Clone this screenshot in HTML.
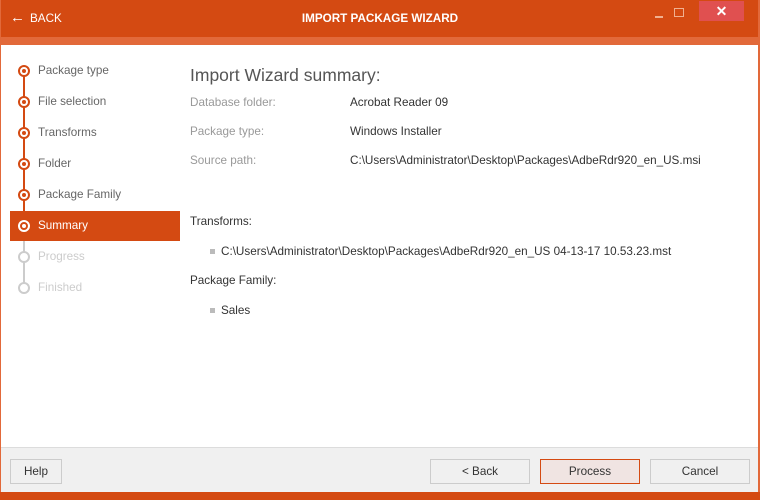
<!DOCTYPE html>
<html><head><meta charset="utf-8"><style>
*{margin:0;padding:0;box-sizing:border-box}
body{width:760px;height:500px;overflow:hidden;font-family:"Liberation Sans",sans-serif;font-size:11.7px;background:#fff;position:relative}
.abs{position:absolute}
#top{left:0;top:0;width:760px;height:37px;background:#D44A12}
#band{left:0;top:37px;width:760px;height:8px;background:#E2693A}
#lb{left:0;top:0;width:1px;height:500px;background:#E2693A}
#rb{right:0;top:0;width:2px;height:500px;background:#E2693A}
#bot{left:0;top:492px;width:760px;height:8px;background:#D44A12}
#foot{left:1px;top:447px;width:757px;height:45px;background:#F0F0F0;border-top:1px solid #dcdcdc}
.t{color:#fff;font-weight:bold}
.step{left:38px;color:#666}
.c{width:12px;height:12px;border-radius:50%;border:2px solid #D44A12;left:18px;background:#fff}
.c::after{content:"";position:absolute;left:2px;top:2px;width:4px;height:4px;border-radius:50%;background:#D44A12}
.g{border-color:#ccc}.g::after{display:none}
.w::after{background:#fff}
.lab{left:190px;color:#999}
.val{left:350px;color:#333}
.btn{top:459px;height:25px;border:1px solid #ccc;background:#f0f0f0;text-align:center;line-height:23px;color:#333}
.sq{width:5px;height:5px;background:#bbb}
</style></head><body>
<div id="top" class="abs"></div>
<div id="band" class="abs"></div>
<div class="abs t" style="left:10px;top:11px;font-size:15px;line-height:14px">&#8592;</div>
<div class="abs t" style="left:30px;top:12px;font-weight:normal">BACK</div>
<div class="abs t" style="left:0;width:760px;text-align:center;top:12px">IMPORT PACKAGE WIZARD</div>
<div class="abs" style="left:655px;top:16px;width:8px;height:2px;background:#f0b090"></div>
<div class="abs" style="left:674px;top:8px;width:10px;height:9px;border:1px solid #f0b090"></div>
<div class="abs" style="left:699px;top:1px;width:45px;height:20px;background:#E05050;color:#fff;text-align:center;font-size:14px;font-weight:bold;line-height:20px">&#10005;</div>
<div id="lb" class="abs"></div><div id="rb" class="abs"></div>

<div class="abs" style="left:23px;top:71px;width:2px;height:155px;background:#D44A12"></div>
<div class="abs" style="left:23px;top:226px;width:2px;height:62px;background:#ccc"></div>
<div class="abs" style="left:10px;top:211px;width:170px;height:30px;background:#D44A12"></div>

<div class="abs c" style="top:65px"></div><div class="abs step" style="top:64px">Package type</div>
<div class="abs c" style="top:96px"></div><div class="abs step" style="top:95px">File selection</div>
<div class="abs c" style="top:127px"></div><div class="abs step" style="top:126px">Transforms</div>
<div class="abs c" style="top:158px"></div><div class="abs step" style="top:157px">Folder</div>
<div class="abs c" style="top:189px"></div><div class="abs step" style="top:188px">Package Family</div>
<div class="abs c w" style="top:220px;border-color:#fff;background:#D44A12"></div><div class="abs step" style="top:219px;color:#fff">Summary</div>
<div class="abs c g" style="top:251px"></div><div class="abs step" style="top:250px;color:#ccc">Progress</div>
<div class="abs c g" style="top:282px"></div><div class="abs step" style="top:281px;color:#ccc">Finished</div>

<div class="abs" style="left:190px;top:65px;font-size:17.5px;color:#555">Import Wizard summary:</div>
<div class="abs lab" style="top:96px">Database folder:</div><div class="abs val" style="top:96px">Acrobat Reader 09</div>
<div class="abs lab" style="top:125px">Package type:</div><div class="abs val" style="top:125px">Windows Installer</div>
<div class="abs lab" style="top:154px">Source path:</div><div class="abs val" style="top:154px">C:\Users\Administrator\Desktop\Packages\AdbeRdr920_en_US.msi</div>
<div class="abs val" style="left:190px;top:215px">Transforms:</div>
<div class="abs sq" style="left:210px;top:249px"></div>
<div class="abs val" style="left:221px;top:245px">C:\Users\Administrator\Desktop\Packages\AdbeRdr920_en_US 04-13-17 10.53.23.mst</div>
<div class="abs val" style="left:190px;top:274px">Package Family:</div>
<div class="abs sq" style="left:210px;top:308px"></div>
<div class="abs val" style="left:221px;top:304px">Sales</div>

<div id="foot" class="abs"></div>
<div class="abs btn" style="left:10px;width:52px">Help</div>
<div class="abs btn" style="left:430px;width:100px">&lt; Back</div>
<div class="abs btn" style="left:540px;width:100px;border-color:#D44A12;background:#F0E4E2">Process</div>
<div class="abs btn" style="left:650px;width:100px">Cancel</div>
<div id="bot" class="abs"></div>
</body></html>
